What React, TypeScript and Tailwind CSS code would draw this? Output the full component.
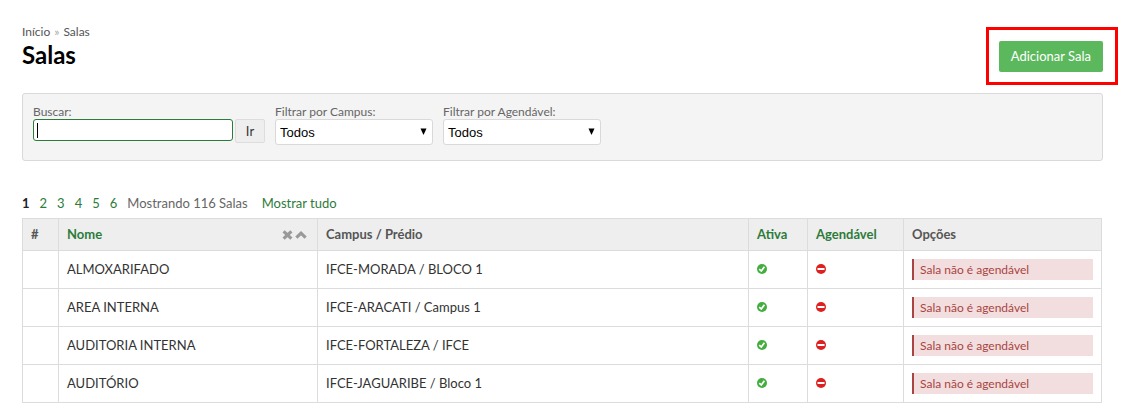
import { useState } from 'react'

const rooms = [
  { name: 'ALMOXARIFADO', place: 'IFCE-MORADA / BLOCO 1' },
  { name: 'AREA INTERNA', place: 'IFCE-ARACATI / Campus 1' },
  { name: 'AUDITORIA INTERNA', place: 'IFCE-FORTALEZA / IFCE' },
  { name: 'AUDITÓRIO', place: 'IFCE-JAGUARIBE / Bloco 1' },
]

const pages = [2, 3, 4, 5, 6]

const CheckIcon = () => (
  <svg className="block w-2.5 h-2.5" viewBox="0 0 10 10" role="img" aria-label="Sim">
    <circle cx="5" cy="5" r="5" fill="#43ad3f" />
    <path d="M2.2 5.1 4.3 7 7.4 2.7" fill="none" stroke="#fff" strokeWidth="1.7" />
  </svg>
)

const DenyIcon = () => (
  <svg className="block w-2.5 h-2.5" viewBox="0 0 10 10" role="img" aria-label="Não">
    <circle cx="5" cy="5" r="5" fill="#dd2020" />
    <rect x="1.5" y="4" width="7" height="2" fill="#fff" />
  </svg>
)

const ClearSortIcon = () => (
  <svg className="block w-[11px] h-2.5" viewBox="0 0 11 10" aria-hidden="true">
    <path d="M1.6 1.3 9.4 8.7M9.4 1.3 1.6 8.7" stroke="#999" strokeWidth="3.2" />
  </svg>
)

const SortUpIcon = () => (
  <svg className="block w-3 h-2.5" viewBox="0 0 12 10" aria-hidden="true">
    <path d="M1.4 7.6 6 3.2 10.6 7.6" fill="none" stroke="#999" strokeWidth="3.2" />
  </svg>
)

const FilterSelect = ({ id, label }: { id: string; label: string }) => (
  <div className="w-[158px]">
    <label htmlFor={id} className="block text-xs leading-[15px] text-[#666]">{label}</label>
    <div className="relative">
      <select
        id={id}
        className="block w-full h-[26px] appearance-none rounded-[3px] border border-[#d9d9d9] bg-white pt-0.5 pl-1 pr-5 font-['Liberation_Sans',sans-serif] text-[13px] text-black"
      >
        <option>Todos</option>
      </select>
      <svg className="pointer-events-none absolute right-1.5 top-[9px] w-[7px] h-[7px]" viewBox="0 0 7 7" aria-hidden="true">
        <path d="M0.5 0.5h6L3.5 7z" fill="#000" />
      </svg>
    </div>
  </div>
)

const App = () => {
  const [search, setSearch] = useState('')

  return (
    <main className="bg-white px-[22px] pt-6 font-[Lato,sans-serif] text-[13px] text-[#333]">
      {/* Header */}
      <header className="flex items-start justify-between">
        <div>
          <nav className="flex gap-1 text-xs leading-4 text-[#555]">
            <a href="#inicio">Início</a>
            <span className="text-[#aaa]">»</span>
            <span>Salas</span>
          </nav>
          <h1 className="text-2xl leading-[30px] font-bold text-black">Salas</h1>
        </div>
        <div className="relative mt-[17px]">
          <a href="#adicionar" className="block h-[31px] rounded-xs bg-[#5cb85c] px-3 leading-[31px] text-white">
            Adicionar Sala
          </a>
          <div className="pointer-events-none absolute -top-3.5 -right-[15px] -bottom-[13px] -left-[13px] border-3 border-[#f00]"></div>
        </div>
      </header>

      {/* Filters */}
      <form
        className="mt-[21px] flex h-[68px] gap-2.5 rounded-[3px] border border-[#d9d9d9] bg-[#f4f4f4] px-2.5 pt-2.5"
        onSubmit={(e) => e.preventDefault()}
      >
        <div>
          <label htmlFor="busca" className="block text-xs leading-[15px] text-[#666]">Buscar:</label>
          <div className="flex items-start gap-0.5">
            <div className="relative">
              <input
                id="busca"
                type="text"
                value={search}
                onChange={(e) => setSearch(e.target.value)}
                className="block h-[22px] w-[200px] rounded-[3px] border border-[#2d7b3b] bg-white px-1 outline-none"
              />
              {search === '' && <span className="pointer-events-none absolute left-1 top-1 h-[15px] w-px bg-black"></span>}
            </div>
            <button type="submit" className="h-6 w-[30px] rounded-xs border border-[#ddd] bg-[#eee] pt-0.5 text-[#333]">
              Ir
            </button>
          </div>
        </div>
        <FilterSelect id="campus" label="Filtrar por Campus:" />
        <FilterSelect id="agendavel" label="Filtrar por Agendável:" />
      </form>

      {/* Pagination */}
      <nav className="mt-[33px] flex gap-2.5 leading-[18px] text-[#666]">
        <span className="font-bold text-[#222]">1</span>
        {pages.map((page) => (
          <a key={page} href={`#p${page}`} className="text-[#2d7b3b]">{page}</a>
        ))}
        <span>Mostrando 116 Salas</span>
        <a href="#todas" className="ml-1 text-[#2d7b3b]">Mostrar tudo</a>
      </nav>

      <div className="mt-1.5 pr-px">
        <table className="w-full table-fixed border-collapse text-left [&_td]:border [&_td]:border-[#dcdcdc] [&_td]:px-2 [&_th]:border [&_th]:border-[#dcdcdc] [&_th]:px-2">
          <thead>
            <tr className="h-8 bg-[#eee] text-[#555]">
              <th className="w-9">#</th>
              <th className="w-[259px]">
                <div className="flex items-center justify-between">
                  <a href="#nome" className="text-[#2d7b3b]">Nome</a>
                  <span className="flex gap-0.5 pr-0.5">
                    <ClearSortIcon />
                    <SortUpIcon />
                  </span>
                </div>
              </th>
              <th>Campus / Prédio</th>
              <th className="w-[59px]"><a href="#ativa" className="text-[#2d7b3b]">Ativa</a></th>
              <th className="w-24"><a href="#agendavel" className="text-[#2d7b3b]">Agendável</a></th>
              <th className="w-[198px]">Opções</th>
            </tr>
          </thead>
          <tbody>
            {rooms.map((room) => (
              <tr key={room.name} className="h-[38px]">
                <td></td>
                <td className="pt-px">{room.name}</td>
                <td className="pt-px">{room.place}</td>
                <td className="pb-px"><CheckIcon /></td>
                <td className="pb-px"><DenyIcon /></td>
                <td className="pb-px">
                  <div className="h-[21px] border-l-2 border-[#a94442] bg-[#f2dede] pl-1.5 text-xs leading-[21px] text-[#a94442]">
                    Sala não é agendável
                  </div>
                </td>
              </tr>
            ))}
          </tbody>
        </table>
      </div>
    </main>
  )
}

export default App
